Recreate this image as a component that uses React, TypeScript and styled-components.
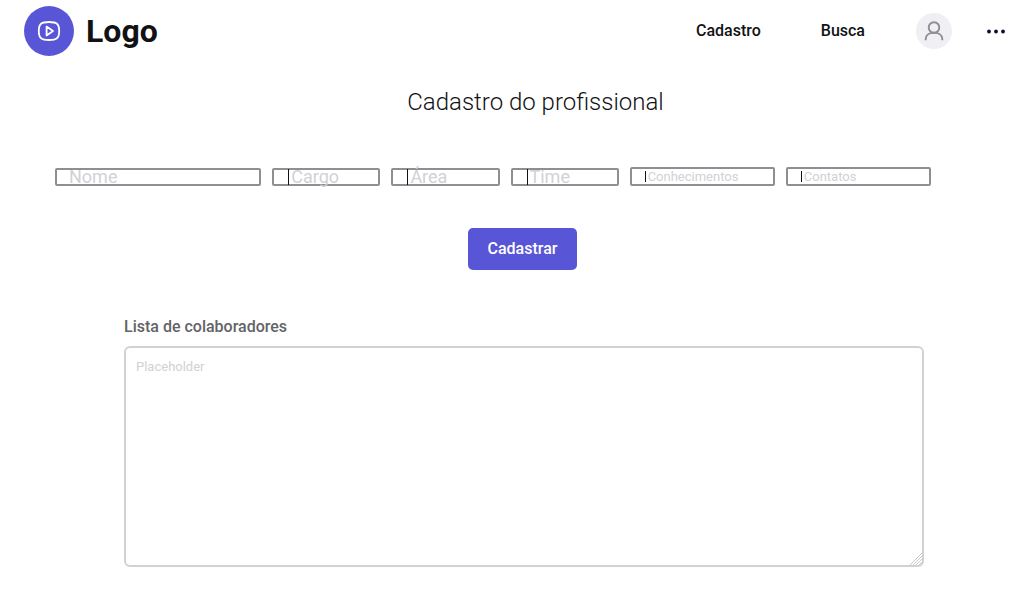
import React from "react";
import styled, { createGlobalStyle } from "styled-components";

const GlobalStyle = createGlobalStyle`
  *, *::before, *::after { box-sizing: border-box; }
  body {
    margin: 0;
    background: #ffffff;
    color: #111214;
    font-family: Roboto, "Liberation Sans", sans-serif;
  }
  button, input, textarea { font-family: inherit; }
`;

const Header = styled.header`
  display: flex;
  align-items: center;
  justify-content: space-between;
  height: 62px;
  padding: 0 24px;
`;

const Brand = styled.a`
  display: flex;
  align-items: center;
  gap: 12px;
  color: inherit;
  font-size: 32px;
  font-weight: 700;
  line-height: 40px;
  text-decoration: none;
`;

const BrandMark = styled.span`
  display: grid;
  place-items: center;
  width: 50px;
  height: 50px;
  border-radius: 50%;
  background: #5856d6;
`;

const Nav = styled.nav`
  display: flex;
  align-items: center;
`;

const NavLink = styled.a`
  margin-right: 60px;
  color: inherit;
  font-size: 16px;
  font-weight: 500;
  line-height: 24px;
  text-decoration: none;

  &:last-of-type { margin-right: 51px; }
`;

const IconButton = styled.button`
  display: grid;
  place-items: center;
  height: 36px;
  padding: 0;
  border: 0;
  background: none;
  cursor: pointer;
`;

const Avatar = styled(IconButton)`
  width: 36px;
  margin-right: 32px;
  border-radius: 50%;
  background: #efeff4;
`;

const MoreButton = styled(IconButton)`
  width: 24px;
`;

const Title = styled.h1`
  margin: 25px 0 0;
  padding-left: 39px;
  font-size: 24px;
  font-weight: 300;
  line-height: 30px;
  text-align: center;
`;

const Form = styled.form`
  display: flex;
  flex-direction: column;
`;

const Fields = styled.div`
  display: grid;
  grid-template-columns: 206fr 108fr 108fr 108fr 145fr 145fr;
  align-items: end;
  gap: 11px;
  margin-top: 50px;
  padding: 0 101px 0 55px;
`;

const Field = styled.label<{ $small?: boolean }>`
  display: flex;
  align-items: center;
  min-width: 0;
  height: ${(p) => (p.$small ? 19 : 18)}px;
  padding-left: ${(p) => (p.$small ? 13 : 12)}px;
  border: 2px solid #8e8e93;
  border-radius: 2px;
`;

const Caret = styled.span<{ $small?: boolean }>`
  flex: none;
  width: 1px;
  height: ${(p) => (p.$small ? 11 : 16)}px;
  margin: 0 2px 0 ${(p) => (p.$small ? 0 : 2)}px;
  background: #111214;
`;

const TextInput = styled.input<{ $small?: boolean }>`
  flex: 1;
  min-width: 0;
  height: 24px;
  padding: 0;
  border: 0;
  outline: 0;
  background: none;
  color: #111214;
  font-size: ${(p) => (p.$small ? 13 : 18)}px;
  line-height: 24px;

  &::placeholder { color: #d1d1d6; opacity: 1; }
`;

const Submit = styled.button`
  align-self: center;
  height: 42px;
  margin: 42px 0 0 13px;
  padding: 0 20px;
  border: 0;
  border-radius: 5px;
  background: #5856d6;
  color: #ffffff;
  font-size: 16px;
  font-weight: 500;
  line-height: 24px;
  cursor: pointer;
`;

const ListSection = styled.section`
  display: flex;
  flex-direction: column;
  gap: 7px;
  padding: 45px 108px 23px 124px;
`;

const ListLabel = styled.label`
  color: #636366;
  font-size: 16px;
  font-weight: 500;
  line-height: 24px;
`;

const ListFrame = styled.div`
  display: grid;
`;

const ListBox = styled.textarea`
  grid-area: 1 / 1;
  display: block;
  width: 100%;
  height: 221px;
  padding: 10px;
  border: 2px solid #d1d1d6;
  border-radius: 6px;
  outline: 0;
  resize: none;
  color: #111214;
  font-size: 13px;
  line-height: 18px;

  &::placeholder { color: #d1d1d6; opacity: 1; }
`;

const Grip = styled.svg`
  grid-area: 1 / 1;
  place-self: end;
  margin: 0 2px 2px 0;
  pointer-events: none;
`;

const fields = [
  { name: "nome", label: "Nome", caret: false, small: false },
  { name: "cargo", label: "Cargo", caret: true, small: false },
  { name: "area", label: "Área", caret: true, small: false },
  { name: "time", label: "Time", caret: true, small: false },
  { name: "conhecimentos", label: "Conhecimentos", caret: true, small: true },
  { name: "contatos", label: "Contatos", caret: true, small: true },
];

export default function App() {
  return (
    <>
      <GlobalStyle />
      <Header>
        <Brand href="#">
          <BrandMark>
            <svg width="24" height="24" viewBox="0 0 24 24" fill="none" stroke="#fff" strokeWidth="1.8" strokeLinejoin="round" aria-hidden="true">
              <path d="M12 3C19.5 3 22.2 4.600 22.200 12S19.500 21 12 21 1.800 19.400 1.800 12 4.500 3 12 3Z" />
              <path d="M9.600 7.600V16.400L16 12Z" />
            </svg>
          </BrandMark>
          Logo
        </Brand>
        <Nav>
          <NavLink href="#cadastro">Cadastro</NavLink>
          <NavLink href="#busca">Busca</NavLink>
          <Avatar type="button" aria-label="Perfil">
            <svg width="24" height="24" viewBox="0 0 24 24" fill="none" stroke="#8e8e93" strokeWidth="1.9" aria-hidden="true">
              <circle cx="12" cy="8.500" r="5.300" />
              <path d="M3.700 21.200V20C3.700 16.300 7 13.800 12 13.800S20.300 16.300 20.300 20V21.200" />
            </svg>
          </Avatar>
          <MoreButton type="button" aria-label="Mais opções">
            <svg width="24" height="24" viewBox="0 0 24 24" fill="#150a33" aria-hidden="true">
              <circle cx="5" cy="12.500" r="1.900" />
              <circle cx="12" cy="12.500" r="1.900" />
              <circle cx="19" cy="12.500" r="1.900" />
            </svg>
          </MoreButton>
        </Nav>
      </Header>
      <main>
        <Title>Cadastro do profissional</Title>
        <Form onSubmit={(e) => e.preventDefault()}>
          <Fields>
            {fields.map((f) => (
              <Field key={f.name} $small={f.small}>
                {f.caret && <Caret $small={f.small} />}
                <TextInput $small={f.small} name={f.name} aria-label={f.label} placeholder={f.label} />
              </Field>
            ))}
          </Fields>
          <Submit type="submit">Cadastrar</Submit>
        </Form>
        <ListSection>
          <ListLabel htmlFor="colaboradores">Lista de colaboradores</ListLabel>
          <ListFrame>
            <ListBox id="colaboradores" placeholder="Placeholder" />
            <Grip width="12" height="12" viewBox="0 0 12 12" stroke="#c7c7cc" strokeWidth="1" aria-hidden="true">
              <path d="M0 12L12 0M3 12L12 3M6 12L12 6M9 12L12 9" />
            </Grip>
          </ListFrame>
        </ListSection>
      </main>
    </>
  );
}
